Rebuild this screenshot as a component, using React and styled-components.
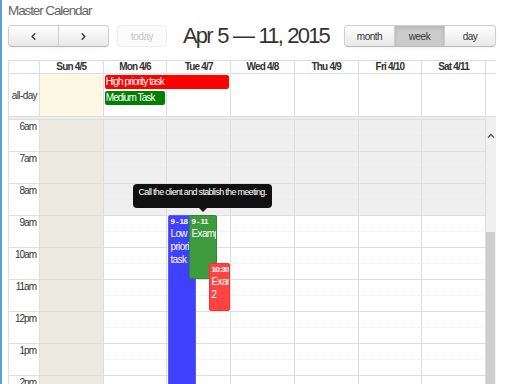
import React from "react";
import styled, { createGlobalStyle, css } from "styled-components";
import { ChevronLeft, ChevronRight } from "lucide-react";

const font = `"Liberation Sans", Arial, sans-serif`;
const cols = `31px repeat(7, 1fr) 10px`;

const days = ["Sun 4/5", "Mon 4/6", "Tue 4/7", "Wed 4/8", "Thu 4/9", "Fri 4/10", "Sat 4/11"];
const hours = ["6am", "7am", "8am", "9am", "10am", "11am", "12pm", "1pm", "2pm", "3pm", "4pm", "5pm"];

const GlobalStyle = createGlobalStyle`
  html, body { margin: 0; padding: 0; background: #fff; overflow: hidden; }
  body { font-family: ${font}; color: #333; letter-spacing: -0.8px; }
  button { letter-spacing: -0.5px; }
`;

export default function App() {
  const slots = [];
  for (let r = 1; r <= hours.length * 2; r++) {
    const isHour = r % 2 === 1;
    for (let c = 1; c <= 8; c++) {
      let bg = "#fff";
      if (c === 2) bg = "#edeadf";
      else if (c > 2 && r <= 6) bg = "#efefef";
      slots.push(
        <Slot key={`${r}-${c}`} $row={r} $col={c} $hour={isHour} $axis={c === 1} $bg={bg}>
          {c === 1 && isHour ? hours[(r - 1) / 2] : null}
        </Slot>
      );
    }
  }

  return (
    <Page>
      <GlobalStyle />
      <Heading>Master Calendar</Heading>
      <Toolbar>
        <Group>
          <Btn $w={51}><ChevronLeft size={11} strokeWidth={3} /></Btn>
          <Btn $w={51}><ChevronRight size={11} strokeWidth={3} /></Btn>
        </Group>
        <Group $ml={8}>
          <Btn $w={50} $disabled>today</Btn>
        </Group>
        <Title>Apr 5 — 11, 2015</Title>
        <Group $ml="auto">
          <Btn $w={51}>month</Btn>
          <Btn $w={51} $active>week</Btn>
          <Btn $w={52}>day</Btn>
        </Group>
      </Toolbar>

      <Table>
        <HeadRow>
          <HeadCell />
          {days.map((d) => (
            <HeadCell key={d}>{d}</HeadCell>
          ))}
          <HeadCell $gutter />
        </HeadRow>

        <AllDayRow>
          <AllDayCell $col={1} $axis>all-day</AllDayCell>
          {days.map((d, i) => (
            <AllDayCell key={d} $col={i + 2} $today={i === 0} />
          ))}
          <AllDayCell $col={9} $gutter />
          <AllDayEvent $row={1} $cols="3 / 5" $color="#ff0000">High priority task</AllDayEvent>
          <AllDayEvent $row={2} $cols="3 / 4" $color="#008000">Medium Task</AllDayEvent>
        </AllDayRow>

        <Divider />

        <TimeArea>
          <SlotGrid>
            {slots}
            <TimedEvent $rows="7 / 25" $ml={1} $w={28} $color="#4040ff" $border="#5a5aff">
              <EvTime>9 - 18</EvTime>
              <EvTitle>Low priority task</EvTitle>
            </TimedEvent>
            <TimedEvent $rows="7 / 11" $ml={22} $w={28} $color="#3d9b3d" $border="#2f8a2f">
              <EvTime>9 - 11</EvTime>
              <EvTitle>Example</EvTitle>
            </TimedEvent>
            <TimedEvent $rows="10 / 13" $ml={42} $w={21} $color="#ff4343" $border="#f03535">
              <EvTime>10:30</EvTime>
              <EvTitle>Example 2</EvTitle>
            </TimedEvent>
          </SlotGrid>
          <ScrollTrack>
            <UpArrow viewBox="0 0 8 5" width="8" height="5">
              <path d="M1 4.5 L4 1.5 L7 4.5" fill="none" stroke="#555" strokeWidth="1.4" />
            </UpArrow>
            <Thumb />
          </ScrollTrack>
          <Tooltip>Call the client and stablish the meeting.</Tooltip>
        </TimeArea>
      </Table>
    </Page>
  );
}

const Page = styled.div`
  border-left: 2px solid #5b9fd6;
  padding: 2px 16px 0 6px;
  height: 384px;
  box-sizing: border-box;
  overflow: hidden;
`;

const Heading = styled.div`
  font-size: 13.5px;
  line-height: 18px;
  letter-spacing: -1.1px;
  color: #666;
  margin-bottom: 5px;
`;

const Toolbar = styled.div`
  display: flex;
  align-items: center;
  height: 22px;
  margin-bottom: 13px;
`;

const Group = styled.div`
  display: flex;
  margin-left: ${(p) => (p.$ml === "auto" ? "auto" : `${p.$ml || 0}px`)};
`;

const Btn = styled.button`
  height: 22px;
  width: ${(p) => p.$w}px;
  margin: 0;
  padding: 0;
  display: flex;
  align-items: center;
  justify-content: center;
  font-family: ${font};
  font-size: 10px;
  color: #333;
  border: 1px solid #cfcfcf;
  border-bottom-color: #b8b8b8;
  background: linear-gradient(#ffffff, #e8e8e8);
  box-shadow: inset 0 1px 0 rgba(255, 255, 255, 0.2), 0 1px 2px rgba(0, 0, 0, 0.05);
  border-radius: 0;
  & + & {
    margin-left: -1px;
  }
  &:first-child {
    border-top-left-radius: 4px;
    border-bottom-left-radius: 4px;
  }
  &:last-child {
    border-top-right-radius: 4px;
    border-bottom-right-radius: 4px;
  }
  ${(p) =>
    p.$active &&
    css`
      background: #cccccc;
      box-shadow: inset 0 2px 4px rgba(0, 0, 0, 0.12), 0 1px 2px rgba(0, 0, 0, 0.05);
    `}
  ${(p) =>
    p.$disabled &&
    css`
      background: #fbfbfb;
      border-color: #ececec;
      color: #c4c4c4;
      box-shadow: none;
    `}
`;

const Title = styled.div`
  margin-left: 16px;
  font-size: 22px;
  line-height: 22px;
  letter-spacing: -1.8px;
  word-spacing: 1px;
  color: #333;
  white-space: nowrap;
`;

const Table = styled.div`
  border-left: 1px solid #ddd;
  border-top: 1px solid #ddd;
`;

const HeadRow = styled.div`
  display: grid;
  grid-template-columns: ${cols};
`;

const HeadCell = styled.div`
  height: 12px;
  border-right: 1px solid ${(p) => (p.$gutter ? "transparent" : "#ddd")};
  border-bottom: 1px solid #ddd;
  font-size: 10px;
  font-weight: bold;
  line-height: 12px;
  text-align: center;
`;

const AllDayRow = styled.div`
  display: grid;
  grid-template-columns: ${cols};
  grid-template-rows: 16px 16px 1fr;
  height: 43px;
`;

const AllDayCell = styled.div`
  grid-row: 1 / -1;
  grid-column: ${(p) => p.$col};
  border-right: 1px solid ${(p) => (p.$gutter ? "transparent" : "#ddd")};
  border-bottom: 1px solid #ddd;
  background: ${(p) => (p.$today ? "#fcf8e3" : "#fff")};
  ${(p) =>
    p.$axis &&
    css`
      display: flex;
      align-items: center;
      justify-content: flex-end;
      padding-right: 2px;
      font-size: 10px;
      letter-spacing: -0.6px;
      white-space: nowrap;
    `}
`;

const AllDayEvent = styled.div`
  grid-row: ${(p) => p.$row};
  grid-column: ${(p) => p.$cols};
  margin: 1px 2px 0 1px;
  height: 14px;
  padding-left: 1px;
  background: ${(p) => p.$color};
  border-radius: 2px;
  color: #fff;
  font-size: 10px;
  line-height: 14px;
  letter-spacing: -0.9px;
  white-space: nowrap;
  overflow: hidden;
`;

const Divider = styled.div`
  height: 2px;
  background: #eee;
`;

const TimeArea = styled.div`
  position: relative;
  display: flex;
  height: 265px;
  overflow: hidden;
`;

const SlotGrid = styled.div`
  flex: 1;
  align-self: flex-start;
  display: grid;
  grid-template-columns: 31px repeat(7, 1fr);
  grid-auto-rows: 16px;
`;

const Slot = styled.div`
  grid-row: ${(p) => p.$row};
  grid-column: ${(p) => p.$col};
  box-sizing: border-box;
  border-top: 1px ${(p) => (p.$hour ? "solid #ddd" : p.$axis ? "solid transparent" : "dotted #e8e8e8")};
  border-right: 1px solid #ddd;
  background: ${(p) => p.$bg};
  font-size: 10px;
  line-height: 13px;
  letter-spacing: -1px;
  text-align: right;
  padding-right: 3px;
  white-space: nowrap;
`;

const TimedEvent = styled.div`
  grid-column: 4;
  grid-row: ${(p) => p.$rows};
  justify-self: start;
  width: ${(p) => p.$w}px;
  margin-left: ${(p) => p.$ml}px;
  box-sizing: border-box;
  padding: 1px 1px 0;
  background: ${(p) => p.$color};
  border: 1px solid ${(p) => p.$border};
  border-radius: 2px;
  color: #fff;
  overflow: hidden;
`;

const EvTime = styled.div`
  font-size: 8px;
  font-weight: bold;
  line-height: 10px;
  letter-spacing: -0.6px;
  white-space: nowrap;
`;

const EvTitle = styled.div`
  font-size: 10px;
  line-height: 13px;
  letter-spacing: -0.6px;
`;

const ScrollTrack = styled.div`
  width: 10px;
  background: #f0f0f0;
  display: flex;
  flex-direction: column;
  align-items: center;
`;

const UpArrow = styled.svg`
  margin-top: 14px;
  flex: none;
`;

const Thumb = styled.div`
  margin-top: 94px;
  align-self: flex-start;
  width: 9px;
  flex: 1;
  background: #cdcdcd;
`;

const Tooltip = styled.div`
  position: absolute;
  left: 124px;
  top: 65px;
  width: 139px;
  height: 24px;
  box-sizing: border-box;
  padding-top: 2px;
  background: #111;
  border-radius: 4px;
  color: #fff;
  font-size: 9px;
  line-height: 13px;
  letter-spacing: -0.7px;
  text-align: center;
  white-space: nowrap;
  z-index: 2;
  &::after {
    content: "";
    position: absolute;
    left: 50%;
    bottom: -4px;
    margin-left: -4px;
    border-left: 4px solid transparent;
    border-right: 4px solid transparent;
    border-top: 4px solid #111;
  }
`;
